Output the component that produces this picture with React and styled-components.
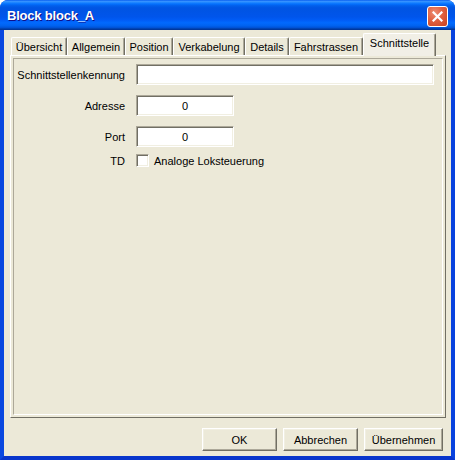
import React from 'react';
import styled, { createGlobalStyle } from 'styled-components';

const Global = createGlobalStyle`
  html, body { margin: 0; padding: 0; background: #ffffff; }
  body { font-family: "Liberation Sans", Arial, sans-serif; font-size: 11px; color: #000; }
  * { box-sizing: border-box; }
`;

const Window = styled.div`
  width: 455px;
  height: 460px;
  display: flex;
  flex-direction: column;
  border-radius: 8px 8px 0 0;
  overflow: hidden;
  background: #0842DE;
`;

const TitleBar = styled.div`
  height: 30px;
  flex: none;
  display: flex;
  align-items: center;
  justify-content: space-between;
  padding: 0 7px 0 7px;
  background: linear-gradient(to bottom,
    #0058EE 0%, #3A93FF 4%, #288EFF 7%, #127DFF 10%, #036FFC 14%,
    #0262EE 18%, #0057E5 24%, #0054E3 30%, #0055EB 56%, #005BF5 66%,
    #026AFE 76%, #0062EF 86%, #0052D6 92%, #0040AB 96%, #003092 100%);
`;

const Title = styled.div`
  color: #ffffff;
  font-weight: bold;
  font-size: 13px;
  padding-top: 1px;
  text-shadow: 1px 1px #0F1089;
  letter-spacing: -0.2px;
`;

const CloseButton = styled.div`
  width: 21px;
  height: 21px;
  margin-top: 3px;
  border: 1px solid #ffffff;
  border-radius: 3px;
  background: radial-gradient(circle at 35% 30%, #EE8E74 0%, #E0603F 45%, #C8411F 100%);
  display: flex;
  align-items: center;
  justify-content: center;
`;

const Frame = styled.div`
  flex: 1;
  display: flex;
  flex-direction: column;
  background: #ECE9D8;
  border-left: 4px solid #0A48E0;
  border-right: 4px solid #0842DE;
  border-bottom: 4px solid #0835CC;
  padding-top: 3px;
`;

const TabStrip = styled.div`
  height: 22px;
  display: flex;
  align-items: flex-end;
  padding-left: 7px;
  flex: none;
`;

const Tab = styled.div`
  position: relative;
  z-index: 2;
  width: ${p => p.$width}px;
  height: ${p => (p.$active ? '23px' : '18px')};
  margin-bottom: ${p => (p.$active ? '-1px' : '0')};
  padding-bottom: ${p => (p.$active ? '4px' : '0')};
  display: flex;
  align-items: center;
  justify-content: center;
  background: ${p => (p.$active ? '#F1EFE6' : '#ECE9D8')};
  border-top: 1px solid #ffffff;
  border-left: 1px solid #ffffff;
  border-right: 1px solid #716F64;
  border-radius: 2px 2px 0 0;
  box-shadow: inset -1px 0 #ACA899;
  white-space: nowrap;
`;

const Panel = styled.div`
  flex: none;
  height: 363px;
  margin: 0 5px 0 6px;
  border-top: 1px solid #ffffff;
  border-left: 1px solid #ffffff;
  border-right: 1px solid #716F64;
  border-bottom: 1px solid #716F64;
  padding: 2px;
  display: flex;
`;

const PanelInner = styled.div`
  flex: 1;
  border-top: 1px solid #ACA899;
  border-left: 1px solid #ACA899;
  border-right: 1px solid #ffffff;
  border-bottom: 1px solid #ffffff;
  padding-top: 5px;
  display: flex;
  flex-direction: column;
`;

const FormRow = styled.div`
  display: grid;
  grid-template-columns: 111px 1fr;
  column-gap: 11px;
  align-items: center;
  margin-top: ${p => p.$top}px;
  height: ${p => p.$height}px;
`;

const Label = styled.div`
  text-align: right;
  white-space: nowrap;
`;

const TextField = styled.div`
  width: ${p => p.$width}px;
  height: 21px;
  background: #ffffff;
  border: 1px solid;
  border-color: #ACA899 #ffffff #ffffff #ACA899;
  box-shadow: inset 1px 1px #716F64, inset -1px -1px #F1EFE2;
  display: flex;
  align-items: center;
  justify-content: center;
`;

const CheckLine = styled.label`
  display: flex;
  align-items: center;
  gap: 5px;
`;

const CheckBox = styled.span`
  width: 13px;
  height: 13px;
  background: #ffffff;
  border: 1px solid;
  border-color: #ACA899 #ffffff #ffffff #ACA899;
  box-shadow: inset 1px 1px #716F64, inset -1px -1px #F1EFE2;
`;

const ButtonRow = styled.div`
  margin-top: 10px;
  display: flex;
  justify-content: flex-end;
  gap: 6px;
  padding-right: 8px;
`;

const Button = styled.div`
  width: ${p => p.$width}px;
  height: 23px;
  background: #ECE9D8;
  border: 1px solid;
  border-color: #ffffff #716F64 #716F64 #ffffff;
  box-shadow: inset -1px -1px #ACA899, inset 1px 1px #F1EFE2;
  display: flex;
  align-items: center;
  justify-content: center;
`;

const tabs = [
  { label: 'Übersicht', width: 56 },
  { label: 'Allgemein', width: 58 },
  { label: 'Position', width: 48 },
  { label: 'Verkabelung', width: 72 },
  { label: 'Details', width: 44 },
  { label: 'Fahrstrassen', width: 74 },
  { label: 'Schnittstelle', width: 73 },
];

export default function App() {
  return (
    <>
      <Global />
      <Window>
        <TitleBar>
          <Title>Block block_A</Title>
          <CloseButton>
            <svg width="11" height="11" viewBox="0 0 11 11">
              <path d="M1.5 1.5 L9.5 9.5 M9.5 1.5 L1.5 9.5" stroke="#ffffff" strokeWidth="2.2" strokeLinecap="square" />
            </svg>
          </CloseButton>
        </TitleBar>
        <Frame>
          <TabStrip>
            {tabs.map((t, i) => (
              <Tab key={t.label} $width={t.width} $active={i === tabs.length - 1}>{t.label}</Tab>
            ))}
          </TabStrip>
          <Panel>
            <PanelInner>
              <FormRow $top={0} $height={21}>
                <Label>Schnittstellenkennung</Label>
                <TextField $width={298} />
              </FormRow>
              <FormRow $top={10} $height={21}>
                <Label>Adresse</Label>
                <TextField $width={98}>0</TextField>
              </FormRow>
              <FormRow $top={10} $height={21}>
                <Label>Port</Label>
                <TextField $width={98}>0</TextField>
              </FormRow>
              <FormRow $top={7} $height={13}>
                <Label>TD</Label>
                <CheckLine>
                  <CheckBox />
                  Analoge Loksteuerung
                </CheckLine>
              </FormRow>
            </PanelInner>
          </Panel>
          <ButtonRow>
            <Button $width={75}>OK</Button>
            <Button $width={75}>Abbrechen</Button>
            <Button $width={79}>Übernehmen</Button>
          </ButtonRow>
        </Frame>
      </Window>
    </>
  );
}
